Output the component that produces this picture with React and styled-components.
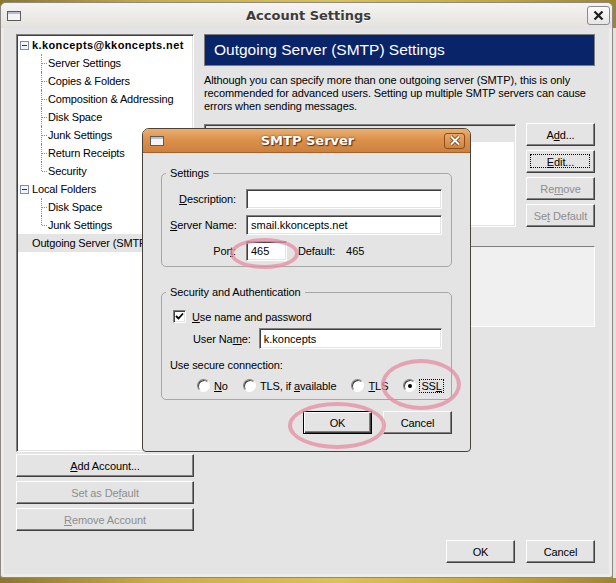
import styled, { createGlobalStyle, css } from "styled-components";

const GlobalStyle = createGlobalStyle`
  html, body { margin: 0; padding: 0; }
  body {
    width: 616px;
    height: 583px;
    overflow: hidden;
    font-family: "Liberation Sans", Arial, sans-serif;
    font-size: 11px;
    letter-spacing: -0.1px;
    color: #000;
  }
  * { box-sizing: border-box; }
`;

const treeItems = [
  { label: "k.koncepts@kkoncepts.net", expander: true, bold: true },
  { label: "Server Settings", child: true },
  { label: "Copies & Folders", child: true },
  { label: "Composition & Addressing", child: true },
  { label: "Disk Space", child: true },
  { label: "Junk Settings", child: true },
  { label: "Return Receipts", child: true },
  { label: "Security", child: true, last: true },
  { label: "Local Folders", expander: true },
  { label: "Disk Space", child: true },
  { label: "Junk Settings", child: true, last: true },
  { label: "Outgoing Server (SMTP)", selected: true },
];

const WinIcon = () => (
  <svg width="14" height="10" viewBox="0 0 14 10">
    <rect x="0.5" y="0.5" width="13" height="9" fill="#f4f4f4" stroke="#5c5c5c" />
    <rect x="1" y="1" width="12" height="2" fill="#b9c0cc" />
  </svg>
);

const Expander = () => (
  <svg width="9" height="9" viewBox="0 0 9 9">
    <rect x="0.5" y="0.5" width="8" height="8" fill="#f2f4f8" stroke="#7d8db0" />
    <path d="M2 4.5 H7" stroke="#2c3550" strokeWidth="1" />
  </svg>
);

const App = () => (
  <>
    <GlobalStyle />
    <Desktop>
      <Window>
        <TitleBar>
          <WinIcon />
          <Title>Account Settings</Title>
          <CloseBox>
            <svg width="11" height="11" viewBox="0 0 11 11">
              <path d="M1.5 1.5 L9.5 9.5 M9.5 1.5 L1.5 9.5" stroke="#1e1e1e" strokeWidth="2.2" />
            </svg>
          </CloseBox>
        </TitleBar>

        <Body>
          <Main>
            <LeftCol>
              <Tree>
                {treeItems.map((item, i) => (
                  <TreeRow
                    key={i}
                    $child={item.child}
                    $last={item.last}
                    $bold={item.bold}
                    $selected={item.selected}
                    $plain={!item.child && !item.expander}
                  >
                    {item.expander && <Expander />}
                    <span>{item.label}</span>
                  </TreeRow>
                ))}
              </Tree>
              <AccountButtons>
                <Button $w={178}><u>A</u>dd Account...</Button>
                <Button $w={178} disabled>Set as De<u>f</u>ault</Button>
                <Button $w={178} disabled><u>R</u>emove Account</Button>
              </AccountButtons>
            </LeftCol>

            <RightCol>
              <Header>Outgoing Server (SMTP) Settings</Header>
              <Desc>
                Although you can specify more than one outgoing server (SMTP), this is only
                <br />
                recommended for advanced users. Setting up multiple SMTP servers can cause
                <br />
                errors when sending messages.
              </Desc>
              <ListRow>
                <ServerList>
                  <ServerItem $selected>k.koncepts - smail.kkoncepts.net</ServerItem>
                </ServerList>
                <SideButtons>
                  <Button>A<u>d</u>d...</Button>
                  <Button $focused><u>E</u>dit...</Button>
                  <Button disabled>Re<u>m</u>ove</Button>
                  <Button disabled>Se<u>t</u> Default</Button>
                </SideButtons>
              </ListRow>
              <DetailsBox />
            </RightCol>
          </Main>

          <Footer>
            <Button>OK</Button>
            <Button>Cancel</Button>
          </Footer>
        </Body>
      </Window>

      <Dialog>
        <DialogTitleBar>
          <WinIcon />
          <DialogTitle>SMTP Server</DialogTitle>
          <DialogClose>
            <svg width="12" height="11" viewBox="0 0 12 11">
              <path d="M2 1.5 L10 9.5 M10 1.5 L2 9.5" stroke="#6a3610" strokeWidth="3.6" />
              <path d="M2 1.5 L10 9.5 M10 1.5 L2 9.5" stroke="#ffffff" strokeWidth="2" />
            </svg>
          </DialogClose>
        </DialogTitleBar>

        <DialogBody>
          <Group $pad="9px 9px 5px 8px">
            <Legend>Settings</Legend>
            <FieldGrid>
              <FieldLabel><u>D</u>escription:</FieldLabel>
              <Input readOnly value="" />
              <FieldLabel><u>S</u>erver Name:</FieldLabel>
              <Input readOnly value="smail.kkoncepts.net" />
              <FieldLabel>Por<u>t</u>:</FieldLabel>
              <PortRow>
                <Input readOnly value="465" $w={41} />
                <PortInfo>Default:</PortInfo>
                <PortInfo>465</PortInfo>
              </PortRow>
            </FieldGrid>
          </Group>

          <Group $pad="11px 9px 7px 8px" $top={19}>
            <Legend>Security and Authentication</Legend>
            <CheckRow>
              <CheckBox>
                <svg width="9" height="9" viewBox="0 0 9 9">
                  <path d="M1 4 L3.5 6.5 L8 1.5" stroke="#000" strokeWidth="1.8" fill="none" />
                </svg>
              </CheckBox>
              <span><u>U</u>se name and password</span>
            </CheckRow>
            <UserRow>
              <span>User Na<u>m</u>e:</span>
              <Input readOnly value="k.koncepts" $h={21} />
            </UserRow>
            <SecureLabel>Use secure connection:</SecureLabel>
            <RadioRow>
              <RadioItem><Radio /><span><u>N</u>o</span></RadioItem>
              <RadioItem><Radio /><span>TLS, if <u>a</u>vailable</span></RadioItem>
              <RadioItem><Radio /><span><u>T</u>LS</span></RadioItem>
              <RadioItem><Radio $checked /><Focused>SS<u>L</u></Focused></RadioItem>
            </RadioRow>
          </Group>

          <DialogButtons>
            <Button $default>OK</Button>
            <Button>Cancel</Button>
          </DialogButtons>
        </DialogBody>
      </Dialog>

      <Mark $x={230} $y={238} $w={69} $h={31} />
      <Mark $x={381} $y={359} $w={80} $h={51} />
      <Mark $x={288} $y={402} $w={98} $h={47} />
    </Desktop>
  </>
);

export default App;

const Desktop = styled.div`
  position: relative;
  width: 616px;
  height: 583px;
  padding-top: 2px;
  background:
    linear-gradient(#e6e2d9, #e6e2d9) no-repeat 613px 28px / 3px 550px,
    linear-gradient(90deg, #8a7630 0%, #c6ad4c 25%, #d8c25c 55%, #c4a842 80%, #9c8436 100%);
`;

const Window = styled.div`
  width: 613px;
  height: 576px;
  border: 1px solid #8c8984;
  border-radius: 6px 6px 3px 3px;
  background: #eeecea;
  display: flex;
  flex-direction: column;
  overflow: hidden;
`;

const TitleBar = styled.div`
  height: 25px;
  padding: 0 2px 0 6px;
  display: grid;
  grid-template-columns: 1fr auto 1fr;
  align-items: center;
  background: linear-gradient(#f5f4f2, #e4e2de);

  svg:first-child { justify-self: start; }
`;

const Title = styled.div`
  font-family: "DejaVu Sans", sans-serif;
  font-weight: 700;
  font-size: 13px;
  letter-spacing: 0;
  color: #3c3c3c;
  text-shadow: 0 1px 0 rgba(255, 255, 255, 0.7);
`;

const CloseBox = styled.div`
  justify-self: end;
  width: 23px;
  height: 19px;
  border: 1px solid #8a8a8a;
  border-radius: 3px;
  background: linear-gradient(#fbfbfb, #e6e6e6);
  display: flex;
  align-items: center;
  justify-content: center;
`;

const Body = styled.div`
  flex: 1;
  margin: 0 3px 3px;
  padding: 6px 14px 11px 12px;
  background: #e4e4e4;
  display: flex;
  flex-direction: column;
`;

const Main = styled.div`
  display: flex;
  gap: 10px;
`;

const LeftCol = styled.div`
  width: 178px;
  display: flex;
  flex-direction: column;
`;

const Tree = styled.div`
  height: 418px;
  padding: 1px;
  background: #fff;
  border: 1px solid;
  border-color: #808080 #fff #fff #808080;
  box-shadow: inset 1px 1px #404040, inset -1px -1px #e4e4e4;
`;

const TreeRow = styled.div`
  position: relative;
  height: 18px;
  display: flex;
  align-items: center;
  gap: 3px;
  padding-left: ${(p) => (p.$child ? 30 : p.$plain ? 14 : 2)}px;
  white-space: nowrap;
  font-weight: ${(p) => (p.$bold ? 700 : 400)};
  letter-spacing: ${(p) => (p.$bold ? "0.4px" : "-0.15px")};
  background: ${(p) => (p.$selected ? "#e4e4e4" : "transparent")};

  ${(p) =>
    p.$child &&
    css`
      &::before {
        content: "";
        position: absolute;
        left: 23px;
        top: 0;
        height: ${p.$last ? 9 : 18}px;
        border-left: 1px dotted #8c8c8c;
      }
      &::after {
        content: "";
        position: absolute;
        left: 24px;
        top: 9px;
        width: 5px;
        border-top: 1px dotted #8c8c8c;
      }
    `}
`;

const AccountButtons = styled.div`
  margin-top: 2px;
  display: flex;
  flex-direction: column;
  gap: 4px;
`;

const Button = styled.button`
  width: ${(p) => p.$w || 69}px;
  height: 23px;
  padding: 0;
  position: relative;
  font-family: "Liberation Sans", Arial, sans-serif;
  font-size: 11px;
  letter-spacing: -0.1px;
  color: ${(p) => (p.disabled ? "#8e8e8e" : "#000")};
  background: #e4e4e4;
  border: 1px solid;
  border-color: #fff #404040 #404040 #fff;
  box-shadow: inset -1px -1px #808080;

  ${(p) =>
    p.$focused &&
    css`
      &::after {
        content: "";
        position: absolute;
        inset: 3px 4px 4px 3px;
        border: 1px dotted #000;
      }
    `}

  ${(p) =>
    p.$default &&
    css`
      border-color: #000;
      box-shadow: inset 1px 1px #fff, inset -1px -1px #404040, inset -2px -2px #808080;
    `}
`;

const RightCol = styled.div`
  flex: 1;
  display: flex;
  flex-direction: column;
`;

const Header = styled.div`
  height: 32px;
  padding-left: 9px;
  display: flex;
  align-items: center;
  border: 1px solid #7c7c7c;
  background: #0a246a;
  color: #fff;
  font-size: 15.5px;
  letter-spacing: 0;
`;

const Desc = styled.p`
  margin: 8px 0 0;
  line-height: 13px;
  white-space: nowrap;
`;

const ListRow = styled.div`
  margin-top: 10px;
  display: flex;
  gap: 10px;
`;

const ServerList = styled.div`
  width: 312px;
  height: 103px;
  margin-top: 1px;
  padding: 1px;
  background: #fff;
  border: 1px solid;
  border-color: #808080 #fff #fff #808080;
  box-shadow: inset 1px 1px #404040, inset -1px -1px #e4e4e4;
`;

const ServerItem = styled.div`
  height: 16px;
  padding-left: 8px;
  line-height: 16px;
  white-space: nowrap;
  background: ${(p) => (p.$selected ? "#e4e4e4" : "transparent")};
`;

const SideButtons = styled.div`
  display: flex;
  flex-direction: column;
  gap: 4px;
`;

const DetailsBox = styled.div`
  margin-top: 19px;
  height: 81px;
  background: #f0f0f0;
  border: 1px solid;
  border-color: #808080 #fff #fff #808080;
`;

const Footer = styled.div`
  margin-top: 9px;
  display: flex;
  justify-content: flex-end;
  gap: 11px;
`;

const Dialog = styled.div`
  position: absolute;
  left: 142px;
  top: 128px;
  width: 329px;
  height: 324px;
  border: 1px solid #4a4238;
  border-radius: 7px 7px 4px 4px;
  background: #e4e4e4;
  display: flex;
  flex-direction: column;
  overflow: hidden;
`;

const DialogTitleBar = styled.div`
  height: 24px;
  padding: 0 5px 0 7px;
  display: grid;
  grid-template-columns: 1fr auto 1fr;
  align-items: center;
  background: linear-gradient(#eab070, #dc914c 45%, #cd813f);
  border-bottom: 1px solid #a5632c;

  svg:first-child { justify-self: start; }
`;

const DialogTitle = styled.div`
  font-family: "DejaVu Sans", sans-serif;
  font-weight: 700;
  font-size: 13px;
  letter-spacing: 0;
  color: #fff;
  text-shadow: 0 0 2px #6a3610, 1px 1px 1px #5c2e0c;
`;

const DialogClose = styled.div`
  justify-self: end;
  width: 21px;
  height: 16px;
  border: 1px solid #8e4c18;
  border-radius: 3px;
  background: linear-gradient(#e9a86a, #d0843f);
  display: flex;
  align-items: center;
  justify-content: center;
`;

const DialogBody = styled.div`
  flex: 1;
  padding: 14px 18px 0 18px;
  display: flex;
  flex-direction: column;
`;

const Group = styled.fieldset`
  margin: ${(p) => p.$top || 0}px 0 0;
  min-width: 0;
  padding: ${(p) => p.$pad};
  border: 1px solid #a6a6a6;
  border-radius: 5px;
  font: inherit;
`;

const Legend = styled.legend`
  margin-left: -4px;
  padding: 0 4px;
  line-height: 13px;
`;

const FieldGrid = styled.div`
  display: grid;
  grid-template-columns: 66px 1fr;
  column-gap: 10px;
  row-gap: 6px;
  align-items: center;
`;

const FieldLabel = styled.span`
  text-align: right;
  white-space: nowrap;
`;

const Input = styled.input`
  width: ${(p) => (p.$w ? `${p.$w}px` : "100%")};
  height: ${(p) => p.$h || 20}px;
  padding: 0 0 0 4px;
  font-family: "Liberation Sans", Arial, sans-serif;
  font-size: 11px;
  color: #000;
  background: #fff;
  border: 1px solid;
  border-color: #808080 #fff #fff #808080;
  box-shadow: inset 1px 1px #404040, inset -1px -1px #e4e4e4;
  outline: none;
  flex: ${(p) => (p.$w ? "none" : "1")};
`;

const PortRow = styled.div`
  display: flex;
  align-items: center;
  gap: 11px;
`;

const PortInfo = styled.span`
  white-space: nowrap;
`;

const CheckRow = styled.div`
  margin-left: 3px;
  height: 13px;
  display: flex;
  align-items: center;
  gap: 6px;
`;

const CheckBox = styled.span`
  width: 13px;
  height: 13px;
  background: #fff;
  border: 1px solid;
  border-color: #808080 #fff #fff #808080;
  box-shadow: inset 1px 1px #404040, inset -1px -1px #e4e4e4;
  display: flex;
  align-items: center;
  justify-content: center;
`;

const UserRow = styled.div`
  margin: 5px 0 0 23px;
  display: flex;
  align-items: center;
  gap: 8px;
  white-space: nowrap;
`;

const SecureLabel = styled.div`
  margin-top: 10px;
  line-height: 13px;
`;

const RadioRow = styled.div`
  margin: 7px 0 0 27px;
  height: 13px;
  display: flex;
  align-items: center;
  gap: 15px;
`;

const RadioItem = styled.span`
  display: flex;
  align-items: center;
  gap: 4px;
  white-space: nowrap;
`;

const Radio = styled.span`
  width: 13px;
  height: 13px;
  border-radius: 50%;
  background: #fff;
  border: 1px solid;
  border-color: #808080 #fff #fff #808080;
  box-shadow: inset 1px 1px #404040;
  display: flex;
  align-items: center;
  justify-content: center;

  ${(p) =>
    p.$checked &&
    css`
      &::after {
        content: "";
        width: 4px;
        height: 4px;
        border-radius: 50%;
        background: #000;
      }
    `}
`;

const Focused = styled.span`
  padding: 0 1px;
  outline: 1px dotted #000;
`;

const DialogButtons = styled.div`
  margin-top: 11px;
  display: flex;
  justify-content: flex-end;
  gap: 11px;
`;

const Mark = styled.div`
  position: absolute;
  left: ${(p) => p.$x}px;
  top: ${(p) => p.$y}px;
  width: ${(p) => p.$w}px;
  height: ${(p) => p.$h}px;
  border: 4px solid rgba(228, 140, 162, 0.75);
  border-radius: 50%;
  pointer-events: none;
`;
